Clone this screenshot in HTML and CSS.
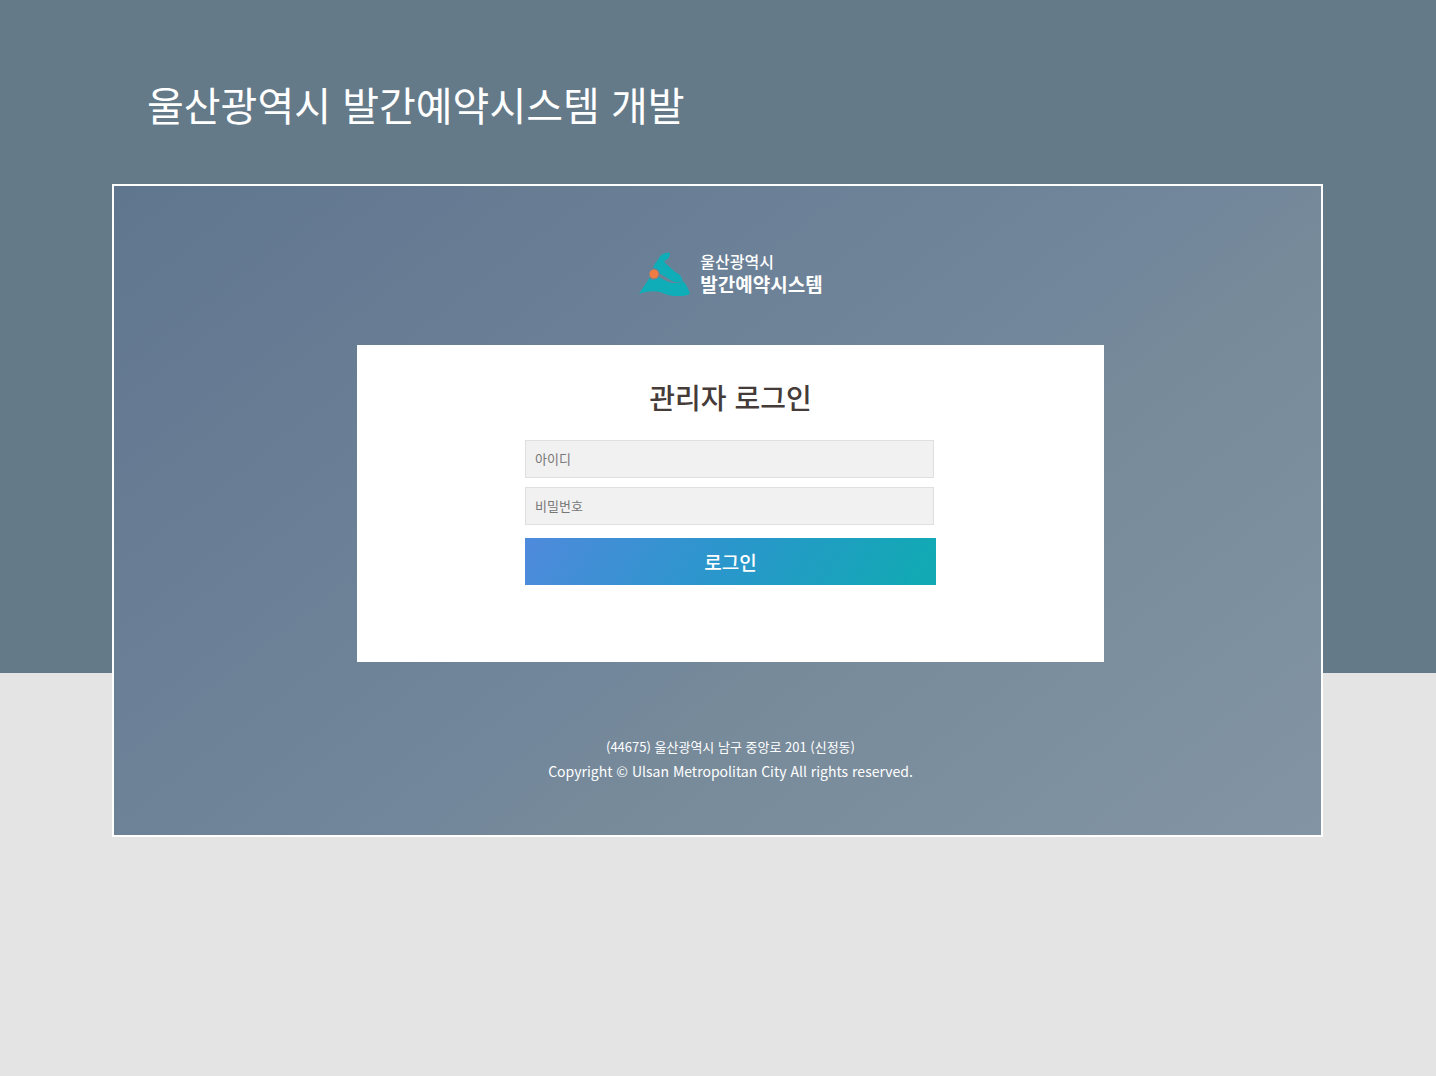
FILE: index.html
```html
<!DOCTYPE html>
<html lang="ko">
<head>
<meta charset="utf-8">
<meta name="viewport" content="width=device-width, initial-scale=1">
<title>울산광역시 발간예약시스템 개발</title>
<link rel="stylesheet" href="styles.css">
</head>
<body>
<h1 class="page-title">울산광역시 발간예약시스템 개발</h1>
<main class="screen">
  <div class="brand">
    <svg class="brand-mark" viewBox="0 0 52 44" aria-hidden="true">
      <path fill="#0fadb8" d="M32 1C28 0 23 2 21 6L19 9C17 11 16 13 15 16C19 16 22 19 22 22C26 23 30 28 35 30C39 31 42 29 45 30C44 26 43 23 39 21C35 19 33 15 28 12L26 9C30 8 32 5 32 1Z"/>
      <path fill="#0fadb8" d="M11 26C14 29 19 28 21 25C26 27 31 31 37 31C42 31 44 29 46 30C49 34 51 38 52 42C46 45 35 45 27 42C18 38 10 39 1 42C3 38 8 32 11 26Z"/>
      <path fill="#6b8196" d="M21 23C27 23 31 28 38 31C31 31 27 28 21 25Z"/>
      <circle cx="16" cy="22" r="4.5" fill="#ef7c42"/>
    </svg>
    <p class="brand-name"><span class="brand-city">울산광역시</span><strong class="brand-system">발간예약시스템</strong></p>
  </div>
  <form class="login">
    <h2 class="login-title">관리자 로그인</h2>
    <div class="fields">
      <input class="field" type="text" placeholder="아이디" aria-label="아이디">
      <input class="field" type="password" placeholder="비밀번호" aria-label="비밀번호">
      <button class="submit" type="button">로그인</button>
    </div>
  </form>
  <footer class="footer">
    <p class="address">(44675) 울산광역시 남구 중앙로 201 (신정동)</p>
    <p class="copyright">Copyright © Ulsan Metropolitan City All rights reserved.</p>
  </footer>
</main>
</body>
</html>
```
FILE: styles.css
```css
* {
  box-sizing: border-box;
}

body {
  margin: 0;
  min-height: 100vh;
  padding: 72px 113px 0 112px;
  background: linear-gradient(#647a89 673px, #e4e4e4 673px) no-repeat #e4e4e4;
  font-family: "Noto Sans CJK KR", "Noto Sans", sans-serif;
  color: #fff;
}

h1, h2, p {
  margin: 0;
}

.page-title {
  padding-left: 35px;
  font-size: 40px;
  font-weight: 400;
  line-height: 64px;
}

.screen {
  display: flex;
  flex-direction: column;
  align-items: center;
  margin-top: 48px;
  padding: 64px 0 52px 26px;
  border: 2px solid #fff;
  background: linear-gradient(142deg, #60768f, #72879b 55%, #778a9a 63%, #8395a4);
}

.brand {
  display: flex;
  align-items: flex-end;
  gap: 10px;
}

.brand-mark {
  width: 52px;
  height: 44px;
}

.brand-name {
  display: flex;
  flex-direction: column;
}

.brand-city {
  font-size: 16px;
  font-weight: 500;
  line-height: 22px;
}

.brand-system {
  font-size: 19px;
  font-weight: 700;
  line-height: 24px;
}

.login {
  display: flex;
  flex-direction: column;
  align-items: center;
  width: 64%;
  max-width: 747px;
  margin-top: 49px;
  padding: 32px 0 77px;
  background: #fff;
}

.login-title {
  color: #453b39;
  font-size: 28px;
  font-weight: 500;
  line-height: 40px;
}

.fields {
  display: flex;
  flex-direction: column;
  width: 55%;
  margin-top: 23px;
}

.field {
  height: 38px;
  margin: 0 2px 9px 0;
  padding: 0 9px 2px;
  border: 1px solid #dfdfdf;
  background: #f1f1f1;
  font-family: inherit;
  font-size: 13px;
}

.field::placeholder {
  color: #777;
}

.submit {
  height: 47px;
  margin-top: 4px;
  border: 0;
  background: linear-gradient(120deg, #4f8adc, #2997cb 50%, #12a9b4 95%);
  color: #fff;
  font-family: inherit;
  font-size: 19px;
  font-weight: 500;
}

.footer {
  margin-top: 73px;
  font-weight: 400;
  line-height: 24px;
  text-align: center;
}

.address {
  font-size: 13px;
}

.copyright {
  font-size: 14px;
}
```
